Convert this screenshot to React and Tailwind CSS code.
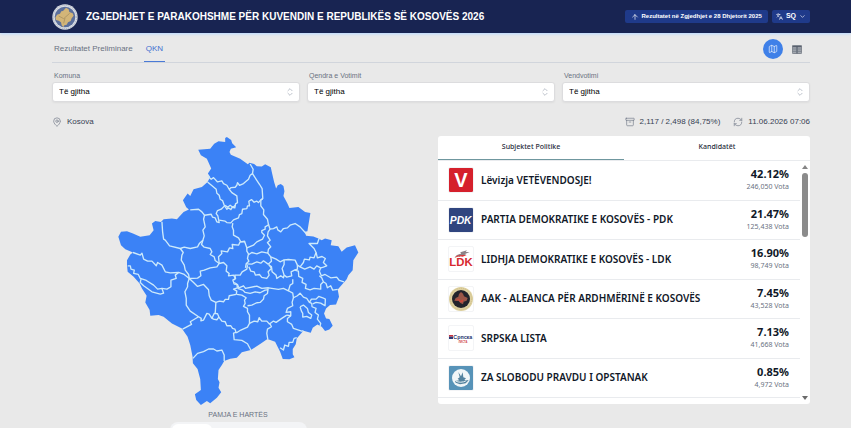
import React, { useState } from 'react';
import { Archive, ArrowUp, ChevronDown, ChevronsUpDown, Languages, Map, MapPin, RefreshCw } from 'lucide-react';

const filters = [
  { id: 'komuna', label: 'Komuna' },
  { id: 'qendra', label: 'Qendra e Votimit' },
  { id: 'vendvotimi', label: 'Vendvotimi' },
];

const parties = [
  { name: 'Lëvizja VETËVENDOSJE!', percent: '42.12%', votes: '246,050', Logo: LogoVV },
  { name: 'PARTIA DEMOKRATIKE E KOSOVËS - PDK', percent: '21.47%', votes: '125,438', Logo: LogoPDK },
  { name: 'LIDHJA DEMOKRATIKE E KOSOVËS - LDK', percent: '16.90%', votes: '98,749', Logo: LogoLDK },
  { name: 'AAK - ALEANCA PËR ARDHMËRINË E KOSOVËS', percent: '7.45%', votes: '43,528', Logo: LogoAAK },
  { name: 'SRPSKA LISTA', percent: '7.13%', votes: '41,668', Logo: LogoSrpska },
  { name: 'ZA SLOBODU PRAVDU I OPSTANAK', percent: '0.85%', votes: '4,972', Logo: LogoSloboda },
];

// Outline of the country
const outline =
  '350,15 363,24 366,34 378,46 362,50 358,60 362,68 390,80 413,97 418,92 432,96 440,103 455,104 465,97 482,106 485,120 492,150 498,170 503,160 512,156 520,162 523,178 520,192 532,215 538,228 565,225 585,240 601,243 592,298 584,300 588,312 610,314 625,320 635,325 645,320 665,325 662,340 685,343 695,360 710,347 735,340 745,362 730,385 728,415 715,430 710,442 695,460 683,473 687,495 678,518 660,520 648,530 642,545 648,560 658,562 668,582 658,593 645,598 635,585 622,578 608,588 602,603 580,597 560,620 557,638 548,652 548,668 553,677 538,683 518,682 510,660 495,630 472,622 450,637 422,655 395,662 380,678 360,681 342,688 335,700 325,715 323,742 328,752 325,768 333,782 320,798 300,815 290,808 272,820 258,805 254,788 272,775 270,742 262,712 248,695 247,675 240,640 232,615 215,590 185,575 160,555 145,550 120,552 118,535 105,512 109,492 95,470 88,455 70,435 52,420 50,400 50,385 60,368 68,362 45,352 32,340 24,315 32,300 50,298 68,305 90,315 118,310 130,295 125,275 135,267 152,270 160,262 185,260 200,262 220,240 236,233 228,226 218,205 232,185 240,192 250,172 275,165 292,150 300,135 293,125 303,110 290,80 272,70 264,53 300,50 312,35 325,28 345,30 345,18';

// Borders between municipalities
const borders = [
  '293,133 303,142 310,137 322,150 335,147 340,155 350,160 357,172 363,167 375,166 380,160 382,152 388,160 400,155 415,142 420,130 427,125 429,112 420,96',
  '292,150 318,172 320,184 327,190 330,202 337,206 343,222 333,232 322,236 318,245 323,252 325,262 327,272 320,270 315,258 307,256 303,247 283,250 275,240 265,232 240,234',
  '357,172 365,182 380,192 382,212 376,216 374,228 366,226 362,233 355,228 350,232 343,222',
  '345,220 352,226 360,220 368,226 376,220',
  '327,265 345,268 350,272 362,273 370,264 385,258 388,248 395,245 397,232 410,230 412,222 418,222 416,208 424,203 432,211 440,208 445,212 452,204 458,200',
  '427,125 440,145 448,157 456,170 458,200 452,205 452,222 461,234 460,248 472,262 475,278 480,292 490,290 500,285 503,294 512,300 520,290 532,288 540,280 555,275 570,285 588,305',
  '283,250 280,262 285,285 278,295 282,312 278,325 268,334 262,345 240,350 222,346 210,350 178,342 165,325 160,322 157,300 155,270',
  '477,278 465,285 465,292 455,296 455,302 463,310 457,322 440,330 430,340 410,348 403,328 392,330 385,318 370,310 370,295 366,285 368,274',
  '410,348 410,358 415,366 412,380 416,388 408,396 406,408',
  '210,350 219,362 215,370 213,385 222,400 225,415 235,428 237,440',
  '278,325 274,338 282,346 300,350 305,360 300,368 312,375 315,386 327,395',
  '327,395 325,375 335,365 333,357 352,360 358,348 368,350 366,338 385,340 390,330 405,330',
  '68,362 90,370 95,364 100,382 112,388 125,388 138,402 142,392 155,400 165,420 180,423 205,422 222,428 237,440',
  '52,402 60,402 62,412 72,415 70,425 84,428 90,440 108,446 130,460 142,472 155,470 160,484 150,487 125,480 100,462 90,452 92,442',
  '155,470 170,472 182,465 182,445 198,440 195,430 205,422',
  '237,440 262,439 272,432 270,418 282,415 300,408 320,405 327,395 340,392 350,402 348,418 357,425 355,432 370,430 376,440 368,445 372,457 380,458 382,468',
  '237,440 250,452 262,464 280,458 295,474 297,492 303,505 317,512 328,508 340,510 345,503 355,503 357,492 378,488 380,478 370,472 382,468',
  '237,440 232,455 232,465 224,480 228,500 228,520 240,538 265,555 240,570 244,578 217,592',
  '265,555 273,560 272,567 280,565 290,545 297,547 305,560 312,545 322,546 326,556 320,564 309,562 305,555',
  '317,512 316,530 315,545',
  '326,556 335,568 345,570 350,582 362,582 367,590 374,592 378,602 370,604 372,624 395,626 412,636 422,655',
  '378,604 392,595 412,586 418,575 418,550 412,540 412,530 400,524 405,515 403,505 408,498 395,490 380,488',
  '248,680 262,665 280,660 295,652 310,652 320,658 335,655 342,670 342,688',
  '480,292 474,300 472,312 480,325 472,332 482,345 475,352 473,364 455,360 440,366 425,362 416,368',
  '473,364 482,375 498,382 510,390 522,384 535,383 555,385 562,400 570,405 580,392 583,382 598,384 600,376 612,378 618,362 612,350 597,335 622,335 627,320',
  '408,396 425,397 440,390 452,394 460,387 474,397 484,388 482,375',
  '370,445 376,440 374,430 390,430 396,420 410,412 412,400',
  '372,452 382,458 386,468 400,462 406,470 440,463 455,470 475,468 505,473 520,470 535,477 540,460 548,455 548,442',
  '416,405 422,418 432,420 436,430 448,428 455,437 470,440 477,430 474,420 484,410 476,398',
  '476,400 484,404 486,420 498,430 500,440 512,432 520,438 522,430 516,410 522,398 522,384',
  '522,430 530,436 545,432 543,420 553,415 562,412 562,400',
  '553,415 565,418 566,434 578,440 576,452 588,458 586,470 600,474 612,470 632,472 632,458 640,450 635,438 628,432',
  '570,405 584,412 600,405 612,412 620,402 632,408 628,418 634,432 645,428 662,438 680,436 688,446 702,450',
  '618,362 622,378 636,374 646,380 640,392 650,402 640,406 632,408',
  '640,450 648,455 652,468 662,462 668,475 683,473',
  '382,470 398,475 405,482 420,485 435,480 450,483 465,475 474,474',
  '474,470 472,485 462,492 460,502 450,512 440,513 425,520 412,522',
  '418,575 432,568 443,570 447,558 455,568 470,568 478,577 490,568 498,572 515,560 530,550',
  '535,477 548,484 550,498 546,512 548,522 532,530 528,542 542,540 542,552 530,550',
  '480,577 484,585 472,592 470,605 473,622',
  '542,552 532,560 532,570 545,578 550,590 575,598 580,597',
  '510,648 520,655 524,640 535,644 537,632 548,632 552,620 560,618',
  '550,498 562,492 570,484 580,496 590,500 598,512 605,515 606,525 618,530 615,542 625,550 622,562 632,575 630,584',
  '598,512 604,502 618,502 626,494 638,498 646,502 645,522 632,514 618,512 608,516',
  '570,525 574,538 578,545 578,556 590,554 602,560 605,550 595,542 592,530 580,520 570,525',
];

function KosovoMap() {
  return (
    <svg viewBox="20 12 730 812" className="w-[243px]" role="img" aria-label="Kosova">
      <polygon points={outline} fill="#3b82f6" />
      <g fill="none" stroke="#cdeafb" strokeWidth="4" strokeLinejoin="round">
        {borders.map((points) => (
          <polyline key={points} points={points} />
        ))}
      </g>
    </svg>
  );
}

function Emblem() {
  return (
    <svg viewBox="0 0 78 78" className="size-[26px] shrink-0" aria-hidden="true">
      <circle cx="39" cy="39" r="38" fill="#d9dde4" />
      <circle cx="39" cy="39" r="35" fill="none" stroke="#8a94a8" strokeWidth="2" strokeDasharray="3 3" />
      <circle cx="39" cy="39" r="31" fill="#5b6f9c" />
      <path d="M42 11l8 5 2 8 10 4 3 7-6 8-3 8-8 4-4 7-7 2-3 6-5-6-2-9-7-5-8-2-2-7 5-9 9-3 4-7 5-1z" fill="#d3b578" />
      <path d="M20 36l15 8 18-16M39 42l-4 16" fill="none" stroke="#a08a5c" strokeWidth="2" />
    </svg>
  );
}

function LogoVV() {
  return (
    <svg viewBox="0 0 72 72" className="size-6">
      <rect width="72" height="72" rx="4" fill="#d5202c" />
      <text x="36" y="57" textAnchor="middle" fontSize="60" fontWeight="700" fill="#fff" fontFamily="Liberation Sans, sans-serif">V</text>
    </svg>
  );
}

function LogoPDK() {
  return (
    <svg viewBox="0 0 72 72" className="size-6">
      <rect width="72" height="72" rx="3" fill="#30457f" />
      <text x="35" y="48" textAnchor="middle" fontSize="31" fontWeight="700" fontStyle="italic" fill="#fff" fontFamily="Liberation Sans, sans-serif">PDK</text>
    </svg>
  );
}

function LogoLDK() {
  return (
    <svg viewBox="0 0 72 72" className="size-6">
      <path d="M18 30c5-7 12-9 18-9l-2-5 20-6-4 5h12l-14 6 4 2-16 2-4 5-5-3z" fill="#8d8488" />
      <path d="M16 32c6-6 14-8 23-8l14 0-12 5-9-1z" fill="#dc3a3a" />
      <text x="36" y="58" textAnchor="middle" fontSize="34" fontWeight="700" fill="#d7282f" fontFamily="Liberation Sans, sans-serif">LDK</text>
    </svg>
  );
}

function LogoAAK() {
  return (
    <svg viewBox="0 0 72 72" className="size-6">
      <circle cx="36" cy="36" r="36" fill="#ddd09f" />
      <circle cx="36" cy="36" r="32" fill="none" stroke="#c7b67e" strokeWidth="2" strokeDasharray="3 3" />
      <circle cx="36" cy="36" r="27" fill="#23242c" />
      <path d="M36 15l6 5 3 8 11 5-3 8-9 3-2 8-8-4-5-6-13-1 4-8 8-4 2-8z" fill="#9a5648" />
      <path d="M20 40l10-5 5 6 8-4-2 9-8-1-4-5z" fill="#cf4a3c" />
    </svg>
  );
}

function LogoSrpska() {
  return (
    <svg viewBox="0 0 72 72" className="size-6">
      <rect x="0" y="27" width="12" height="5" fill="#c8313e" />
      <rect x="0" y="32" width="12" height="7" fill="#2b3a78" />
      <text x="13" y="40" fontSize="16" fontWeight="700" fill="#27336e" fontFamily="Liberation Sans, sans-serif">Српска</text>
      <text x="42" y="51" textAnchor="middle" fontSize="8" fontWeight="700" fill="#d0424c" fontFamily="Liberation Sans, sans-serif">ЛИСТА</text>
    </svg>
  );
}

function LogoSloboda() {
  return (
    <svg viewBox="0 0 72 72" className="size-6">
      <rect width="72" height="72" rx="3" fill="#5793b8" />
      <circle cx="36" cy="36" r="27" fill="#f1f6f8" />
      <path d="M28 18l8 13 5-12 2 15 8 3-5 5 13 1-9 9-17 3-13-5-2-5 13-2-5-5 6-4z" fill="#54839f" />
      <path d="M20 45c8 5 22 5 32-1" fill="none" stroke="#e8f1f5" strokeWidth="3" />
    </svg>
  );
}

function FilterSelect({ id, label }) {
  return (
    <div className="flex flex-col">
      <label htmlFor={id} className="pl-[2px] text-[7px] leading-[10px] text-gray-500">
        {label}
      </label>
      <div className="relative mt-px">
        <select
          id={id}
          className="block h-5 w-full appearance-none rounded-[3px] border border-[#dcdcde] bg-white px-[6px] text-[8px] font-medium text-black shadow-xs"
        >
          <option>Të gjitha</option>
        </select>
        <ChevronsUpDown className="pointer-events-none absolute top-[5px] right-[5px] size-[10px] text-gray-400" strokeWidth={1.5} />
      </div>
    </div>
  );
}

function PartyRow({ party }) {
  const { name, percent, votes, Logo } = party;
  return (
    <li className="flex items-center border-b border-[#e9ebee] pr-[11px] pl-[10px]">
      <span className="flex size-[26px] shrink-0 items-center justify-center rounded-[2px] border border-gray-100">
        <Logo />
      </span>
      <span className="ml-[7px] flex-1 text-[10px] font-semibold text-gray-900">{name}</span>
      <div className="text-right">
        <p className="text-[11px] leading-[14px] font-bold text-gray-900">{percent}</p>
        <p className="text-[7px] leading-[12px] text-gray-500">{votes} Vota</p>
      </div>
    </li>
  );
}

export default function App() {
  const [tab, setTab] = useState('subjektet');

  return (
    <div className="h-screen overflow-hidden bg-[#e9e9e9] font-['Liberation_Sans',sans-serif]">
      {/* Header */}
      <header className="flex h-[33px] items-center bg-[#182452] pr-[41px] pl-[52px] shadow-sm shadow-blue-200">
        <Emblem />
        <h1 className="ml-2 flex-1 text-[10px] font-bold text-white">
          ZGJEDHJET E PARAKOHSHME PËR KUVENDIN E REPUBLIKËS SË KOSOVËS 2026
        </h1>
        <a href="#rezultatet" className="flex h-[13px] items-center gap-[3px] rounded-[2px] bg-[#1f3a8a] px-[6px] text-[6px] font-bold text-white">
          <ArrowUp className="size-2" />
          Rezultatet në Zgjedhjet e 28 Dhjetorit 2025
        </a>
        <button className="ml-1 flex h-[13px] items-center gap-[3px] rounded-[2px] bg-[#1f3a8a] px-1 text-[7px] font-bold text-white">
          <Languages className="size-[7px]" />
          SQ
          <ChevronDown className="size-[7px]" />
        </button>
      </header>

      <main className="pr-[41px] pl-[52px]">
        {/* Page tabs */}
        <div className="flex h-[30px] items-stretch border-b border-gray-300">
          <nav className="flex flex-1 text-[8px] font-medium">
            <a href="#preliminare" className="flex items-center border-b border-transparent px-[2px] pt-1 text-gray-500">
              Rezultatet Preliminare
            </a>
            <a href="#qkn" className="ml-[9px] flex items-center border-b border-[#4a7ad6] px-[2px] pt-1 text-[#3f6fd0]">
              QKN
            </a>
          </nav>
          <div className="flex items-center gap-1 pr-[3px] pt-[3px]">
            <button aria-label="Harta" className="flex size-5 items-center justify-center rounded-full bg-[#3f80e8] text-white">
              <Map className="size-[10px]" strokeWidth={1.5} />
            </button>
            <button aria-label="Tabela" className="flex size-5 items-center justify-center">
              <svg viewBox="0 0 30 27" className="w-[10px]">
                <rect x="1" y="1" width="28" height="25" rx="3" fill="#a3a8b0" stroke="#5b626e" strokeWidth="2" />
                <path d="M2 5h26M15 5v20" stroke="#4b5563" strokeWidth="3" />
                <path d="M2 12h26M2 19h26" stroke="#6b7280" strokeWidth="2" />
              </svg>
            </button>
          </div>
        </div>

        {/* Filters */}
        <div className="mt-2 grid grid-cols-3 gap-[7px]">
          {filters.map((filter) => (
            <FilterSelect key={filter.id} {...filter} />
          ))}
        </div>

        {/* Location and counted polling stations */}
        <div className="mt-[14px] flex h-3 items-center text-[8px] text-gray-700">
          <MapPin className="size-[10px] text-gray-500" strokeWidth={1.5} />
          <span className="ml-[5px] flex-1">Kosova</span>
          <Archive className="size-[10px] text-gray-500" strokeWidth={1.5} />
          <span className="ml-[5px]">2,117 / 2,498 (84,75%)</span>
          <RefreshCw className="ml-[13px] size-[10px] text-gray-500" strokeWidth={1.5} />
          <span className="ml-[5px]">11.06.2026 07:06</span>
        </div>

        <div className="mt-2 grid grid-cols-2 items-start gap-[14px]">
          {/* Map */}
          <section className="flex flex-col items-center">
            <KosovoMap />
            <p className="mt-1 text-[7px] leading-[10px] text-gray-500">PAMJA E HARTËS</p>
            <div className="mt-[2px] flex h-5 w-[137px] rounded-lg bg-gray-100 p-[2px]">
              <button aria-label="Pamja e hartës" className="w-10 rounded-md bg-white" />
            </div>
          </section>

          {/* Results */}
          <section className="rounded-[3px] bg-white font-['Noto_Sans',sans-serif]">
            <div className="grid h-[25px] grid-cols-2 border-b border-[#e9ebee] text-[7px] font-medium text-gray-800">
              <button
                onClick={() => setTab('subjektet')}
                className={tab === 'subjektet' ? 'border-b border-[#6f979f]' : 'border-b border-transparent'}
              >
                Subjektet Politike
              </button>
              <button
                onClick={() => setTab('kandidatet')}
                className={tab === 'kandidatet' ? 'border-b border-[#6f979f]' : 'border-b border-transparent'}
              >
                Kandidatët
              </button>
            </div>
            <div className="flex">
              <ul className="mb-[6px] grid min-h-[237px] flex-1 grid-rows-6">
                {parties.map((party) => (
                  <PartyRow key={party.name} party={party} />
                ))}
              </ul>
              <div className="flex w-[10px] flex-col items-center justify-between py-1" aria-hidden="true">
                <svg viewBox="0 0 6 4" className="w-[6px]">
                  <path d="M0 4l3-4 3 4z" fill="#858585" />
                </svg>
                <div className="mt-1 mb-auto h-16 w-[6px] rounded-full bg-[#8b8b8b]" />
                <svg viewBox="0 0 6 4" className="w-[6px]">
                  <path d="M0 0l3 4 3-4z" fill="#6b6b6b" />
                </svg>
              </div>
            </div>
          </section>
        </div>
      </main>
    </div>
  );
}
